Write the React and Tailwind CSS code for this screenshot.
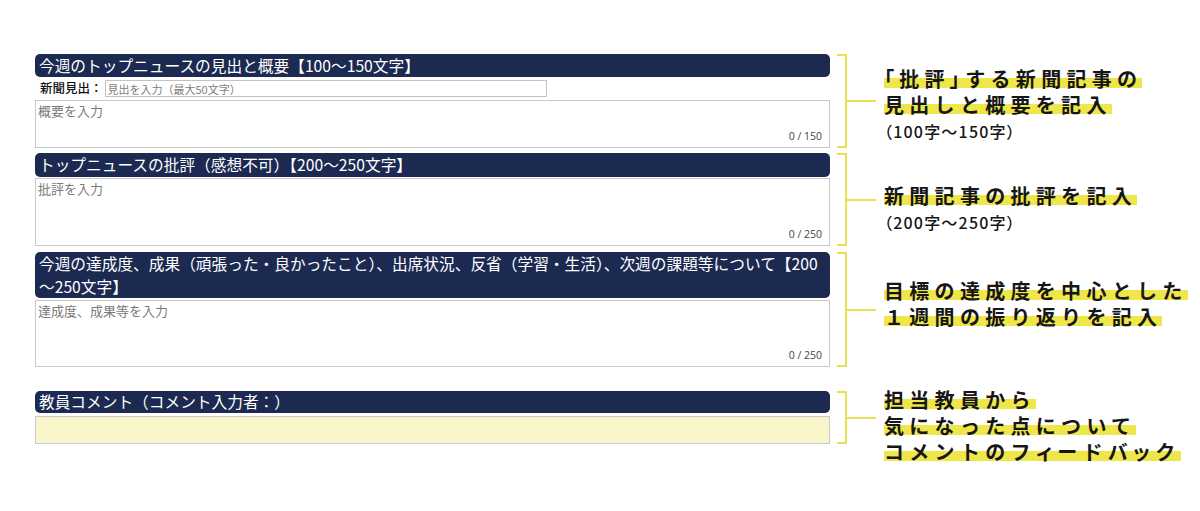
import React from "react";

function Header({ children, lead }) {
  return (
    <div className={`rounded-[5px] bg-[#1c2951] pl-[4px] text-[15.7px] text-white ${lead}`}>
      {children}
    </div>
  );
}

function Field({ placeholder, max, h }) {
  return (
    <div className="relative">
      <textarea
        placeholder={placeholder}
        className={`block w-full resize-none border border-[#c9c9c9] bg-white px-[2px] py-[1px] text-[13px] leading-[18px] text-[#333] outline-none placeholder:text-[#7a7a7a] ${h}`}
      />
      <span className="pointer-events-none absolute bottom-[3px] right-[8px] text-[10.5px] text-[#444] [font-family:'Open_Sans',sans-serif]">
        0 / {max}
      </span>
    </div>
  );
}

function Bracket() {
  return (
    <div className="ml-[7px] flex self-stretch items-center">
      <div className="w-[10px] self-stretch border-y-2 border-r-2 border-[#e9e150]" />
      <div className="h-[2px] w-[29px] bg-[#e9e150]" />
    </div>
  );
}

function Mark({ children }) {
  return (
    <div>
      <span className="bg-[linear-gradient(transparent_47%,#efe649_47%,#efe649_82%,transparent_82%)] [box-decoration-break:clone]">
        {children}
      </span>
    </div>
  );
}

// 括弧と小書き仮名だけ詰める
function Tight({ children }) {
  return <span className="[font-feature-settings:'palt']">{children}</span>;
}

function Note({ lines, sub, className }) {
  return (
    <div className={`ml-[8px] self-start text-[20px] font-bold leading-[26px] tracking-[5.3px] text-[#161616] ${className}`}>
      {lines.map((l, i) => (
        <Mark key={i}>{l}</Mark>
      ))}
      {sub && (
        <div className="text-[16px] font-medium leading-[26px] tracking-[1.2px]">
          <Tight>（</Tight>
          {sub}
          <Tight>）</Tight>
        </div>
      )}
    </div>
  );
}

export default function App() {
  return (
    <div lang="ja" className="min-h-[511px] bg-white pl-[35px] pt-[54px] [font-family:'Noto_Sans_CJK_JP','Noto_Sans',sans-serif]">
      {/* 今週のトップニュース */}
      <div className="flex">
        <div className="flex w-[795px] flex-col">
          <Header lead="leading-[23px]">今週のトップニュースの見出と概要【100〜150文字】</Header>
          <div className="flex h-[23px] items-center gap-[2px] pl-[5px]">
            <span className="text-[12.5px] font-medium text-[#111]">新聞見出：</span>
            <input
              placeholder="見出を入力（最大50文字）"
              className="h-[17px] w-[442px] border border-[#c3c3c3] px-[2px] text-[11px] outline-none placeholder:text-[#808080]"
            />
          </div>
          <Field placeholder="概要を入力" max={150} h="h-[48px]" />
        </div>
        <Bracket />
        <Note
          className="mt-[12px]"
          lines={[
            <>
              <Tight>「</Tight>批評<Tight>」</Tight>する新聞記事の
            </>,
            "見出しと概要を記入",
          ]}
          sub="100字〜150字"
        />
      </div>

      {/* 批評 */}
      <div className="mt-[5px] flex">
        <div className="flex w-[795px] flex-col gap-[1px]">
          <Header lead="leading-[24px]">トップニュースの批評（感想不可）【200〜250文字】</Header>
          <Field placeholder="批評を入力" max={250} h="h-[68px]" />
        </div>
        <Bracket />
        <Note className="mt-[30px]" lines={["新聞記事の批評を記入"]} sub="200字〜250字" />
      </div>

      {/* 振り返り */}
      <div className="mt-[6px] flex">
        <div className="flex w-[795px] flex-col gap-[2px]">
          <Header lead="leading-[23px]">
            今週の達成度、成果（頑張った・良かったこと）、出席状況、反省（学習・生活）、次週の課題等について【200
            <br />
            〜250文字】
          </Header>
          <Field placeholder="達成度、成果等を入力" max={250} h="h-[67px]" />
        </div>
        <Bracket />
        <Note className="mt-[26px]" lines={["目標の達成度を中心とした", "１週間の振り返りを記入"]} />
      </div>

      {/* 教員コメント */}
      <div className="mt-[24px] flex">
        <div className="flex w-[795px] flex-col gap-[3px]">
          <Header lead="leading-[22px]">教員コメント（コメント入力者：）</Header>
          <div className="h-[28px] border border-[#c9c9c9] bg-[#faf6cc]" />
        </div>
        <Bracket />
        <Note
          className="mb-[-24px] mt-[-4px]"
          lines={[
            "担当教員から",
            "気になった点について",
            <>
              コメントのフ<Tight>ィ</Tight>ードバ<Tight>ッ</Tight>ク
            </>,
          ]}
        />
      </div>
    </div>
  );
}
